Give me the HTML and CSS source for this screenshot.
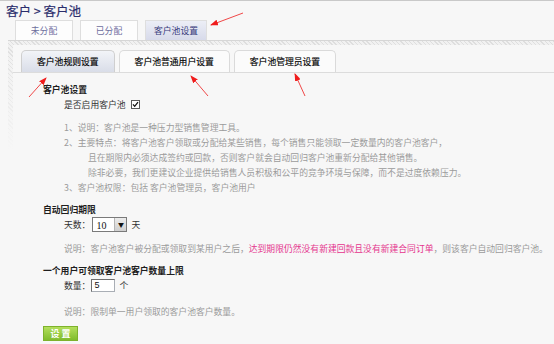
FILE: index.html
```html
<!DOCTYPE html>
<html lang="zh-CN">
<head>
    <meta charset="UTF-8">
    <meta name="viewport" content="width=device-width, initial-scale=1.0">
    <title>客户池设置</title>
    <link rel="stylesheet" href="styles.css">
</head>
<body>
    <h1 class="crumb">客户 &gt; 客户池</h1>

    <!-- top level tabs -->
    <ul class="main-tabs">
        <li><a href="#">未分配</a></li>
        <li><a href="#">已分配</a></li>
        <li class="active"><a href="#">客户池设置</a></li>
    </ul>

    <div class="panel">
        <div class="panel-inner">
            <ul class="sub-tabs">
                <li class="active">客户池规则设置</li>
                <li>客户池普通用户设置</li>
                <li>客户池管理员设置</li>
            </ul>

            <form class="rules">
                <h3>客户池设置</h3>
                <div class="field">
                    是否启用客户池
                    <span class="check">
                        <svg width="9" height="9" viewBox="0 0 9 9">
                            <rect x="0.5" y="0.5" width="8" height="8" fill="#fff" stroke="#5a5a5a"/>
                            <path d="M2 4.3 L3.7 6.3 L7 2.2" fill="none" stroke="#111" stroke-width="1.3"/>
                        </svg>
                    </span>
                </div>

                <ol class="notes">
                    <li>1、说明：客户池是一种压力型销售管理工具。</li>
                    <li>2、主要特点：将客户池客户领取或分配给某些销售，每个销售只能领取一定数量内的客户池客户，</li>
                    <li class="indent">且在期限内必须达成签约或回款，否则客户就会自动回归客户池重新分配给其他销售。</li>
                    <li class="indent">除非必要，我们更建议企业提供给销售人员积极和公平的竞争环境与保障，而不是过度依赖压力。</li>
                    <li>3、客户池权限：包括 客户池管理员，客户池用户</li>
                </ol>

                <h3 class="gap">自动回归期限</h3>
                <div class="field">
                    天数：<span class="select-wrap"><select name="days"><option>10</option></select></span><span class="unit">天</span>
                </div>
                <p class="desc">说明：客户池客户被分配或领取到某用户之后，<span class="hot">达到期限仍然没有新建回款且没有新建合同订单</span>，则该客户自动回归客户池。</p>

                <h3 class="gap">一个用户可领取客户池客户数量上限</h3>
                <div class="field">
                    数量：<input type="text" class="num-input" value="5"><span class="unit">个</span>
                </div>
                <p class="desc desc-last">说明：限制单一用户领取的客户池客户数量。</p>

                <button type="button" class="btn-save">设 置</button>
            </form>
        </div>
    </div>

    <!-- red annotation arrows drawn over the screenshot -->
    <svg class="marks" width="554" height="344" viewBox="0 0 554 344">
        <defs>
            <marker id="head" markerWidth="8" markerHeight="6" refX="7" refY="3" orient="auto" markerUnits="userSpaceOnUse">
                <path d="M0 0 L8 3 L0 6 Z" fill="#f01c1c"/>
            </marker>
        </defs>
        <line x1="243" y1="13" x2="211" y2="25" marker-end="url(#head)"/>
        <line x1="29" y1="97" x2="46" y2="78" marker-end="url(#head)"/>
        <line x1="208" y1="96" x2="191" y2="76" marker-end="url(#head)"/>
        <line x1="305" y1="96" x2="295" y2="74" marker-end="url(#head)"/>
    </svg>
</body>
</html>
```

FILE: styles.css
```css
/* Reset */
* {
    margin: 0;
    padding: 0;
    box-sizing: border-box;
}

body {
    font-family: "Noto Sans CJK SC", "Noto Sans", sans-serif;
    font-size: 8.8px;
    background: #f7f7f7;
    border-top: 1px solid #c9c9c9;
    color: #333;
}

.crumb {
    font-size: 12.5px;
    font-weight: normal;
    color: #2a2d6c;
    line-height: 19px;
    padding-left: 6px;
    -webkit-text-stroke: 0.2px #2a2d6c;
}

/* Top tabs */
.main-tabs {
    display: flex;
    gap: 7px;
    list-style: none;
    padding-left: 15px;
    height: 20px;
}

.main-tabs a {
    display: block;
    min-width: 58px;
    height: 20px;
    padding: 0 8px;
    border: 1px solid #dedede;
    border-bottom: none;
    background: #fdfdfd;
    color: #6e6f9e;
    line-height: 19px;
    text-align: center;
    text-decoration: none;
}

.main-tabs .active a {
    background: linear-gradient(#eceef6, #d7daea);
    color: #36397a;
}

/* Content panel with hatched frame */
.panel {
    margin-left: 8px;
    border-top: 1px solid #d6d6d6;
    padding: 4px 0 0 5px;
    background:
        linear-gradient(rgba(247, 247, 247, 0) 0, #f7f7f7 110px),
        repeating-linear-gradient(45deg, #dedede 0 1px, #f1f1f1 1px 3px);
}

.panel-inner {
    background: #f7f7f7;
    padding-top: 5px;
    min-height: 300px;
}

.sub-tabs {
    display: flex;
    gap: 4px;
    list-style: none;
    padding-left: 8px;
    border-bottom: 1px solid #dcdcdc;
}

.sub-tabs li {
    height: 22px;
    padding: 0 15px;
    border: 1px solid #dadada;
    border-bottom: none;
    border-radius: 5px 5px 0 0;
    background: #fbfbfb;
    color: #000;
    line-height: 21px;
    -webkit-text-stroke: 0.15px #000;
}

.sub-tabs .active {
    background: linear-gradient(#f2f4f8, #d9dde8);
    border-color: #cfcfcf;
}

/* Rules form */
.rules {
    padding: 9px 0 0 30px;
    line-height: 15px;
}

.rules h3 {
    font-size: 8.8px;
    font-weight: bold;
    color: #1e1e1e;
}

.rules h3.gap {
    margin-top: 7px;
}

.field {
    padding-left: 21px;
    height: 15px;
    color: #333;
}

.check {
    display: inline-block;
    margin-left: 3px;
    vertical-align: -1px;
    line-height: 0;
}

.notes {
    list-style: none;
    margin-top: 7.5px;
    padding-left: 21px;
    color: #9b9b9b;
}

.notes .indent {
    padding-left: 24px;
}

.select-wrap {
    display: inline-block;
    position: relative;
    width: 35px;
    height: 15px;
    margin-left: 2px;
    border: 1px solid #7a7a7a;
    background: #fff;
    vertical-align: top;
}

.select-wrap select {
    appearance: none;
    border: none;
    background: transparent;
    width: 100%;
    height: 13px;
    padding-left: 3px;
    font-family: "Liberation Serif", serif;
    font-size: 10px;
    line-height: 13px;
    color: #111;
}

.select-wrap::after {
    content: "▼";
    position: absolute;
    top: 0;
    right: 0;
    width: 11px;
    height: 13px;
    border-left: 1px solid #b5b5b5;
    background: linear-gradient(#ececec, #cfcfcf);
    font-size: 6px;
    line-height: 13px;
    text-align: center;
    color: #111;
}

.unit {
    margin-left: 4px;
}

.num-input {
    width: 24px;
    height: 13px;
    margin-left: 1px;
    padding: 0 2px;
    border: 1px solid #a9aeb5;
    border-top-color: #6f6f6f;
    border-left-color: #6f6f6f;
    background: #fff;
    font-family: "Liberation Sans", sans-serif;
    font-size: 9px;
    color: #111;
    vertical-align: 1px;
}

.desc {
    margin-top: 9.5px;
    padding-left: 21px;
    color: #9b9b9b;
    white-space: nowrap;
}

.desc .hot {
    color: #e5348d;
}

.desc-last {
    margin-top: 10.5px;
}

.btn-save {
    display: block;
    margin-top: 7px;
    width: 35px;
    height: 15px;
    border: 1px solid #7eb22c;
    background: linear-gradient(#b3df5c, #80bc2c);
    color: #fff;
    font-family: "Noto Sans CJK SC", sans-serif;
    font-size: 9px;
    font-weight: bold;
    line-height: 13px;
}

.marks {
    position: absolute;
    top: 0;
    left: 0;
    pointer-events: none;
}

.marks line {
    stroke: #f04848;
    stroke-width: 1;
}
```
